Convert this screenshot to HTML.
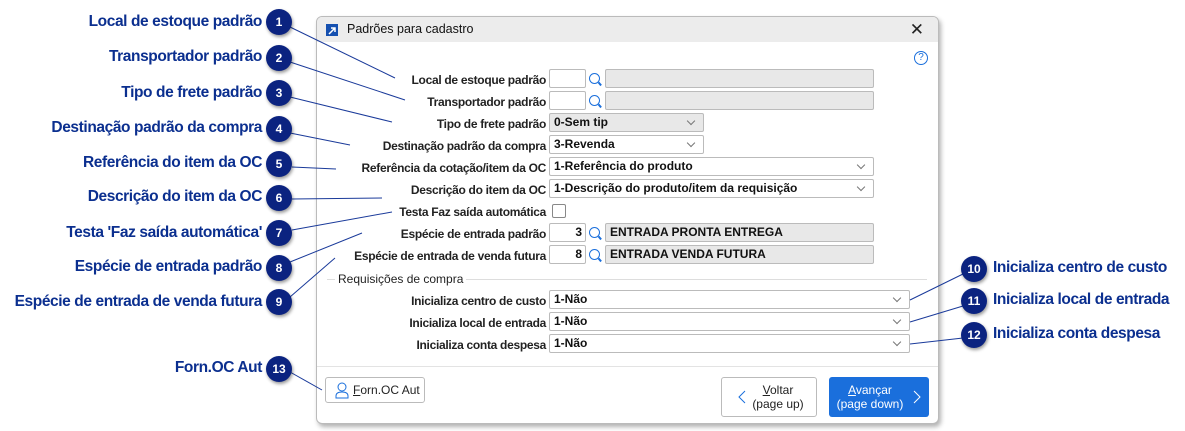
<!DOCTYPE html><html><head><meta charset="utf-8"><style>
body{margin:0;width:1185px;height:431px;background:#fff;position:relative;overflow:hidden;font-family:"Liberation Sans",sans-serif}
.co{position:absolute;right:923px;font-weight:bold;color:#0b2f8f;font-size:15.5px;white-space:nowrap;letter-spacing:-0.4px}
.cr{position:absolute;left:993px;font-weight:bold;color:#0b2f8f;font-size:15.5px;white-space:nowrap;letter-spacing:-0.4px}
.ci{position:absolute;width:26px;height:26px;border-radius:50%;background:#0b2380;color:#fff;font-size:12px;font-weight:bold;text-align:center;line-height:26px;box-shadow:1px 2px 3px rgba(0,0,0,.4);z-index:3}
.dlg{position:absolute;left:316px;top:16px;width:621px;height:406px;border:1px solid #bbb;border-radius:6px;background:#fff;box-shadow:2px 3px 5px rgba(0,0,0,.3);overflow:hidden}
.tb{height:25px;background:#ececec;font-size:12.5px;line-height:25px;padding-left:30px;color:#111}
.l{position:absolute;right:392px;font-size:12px;font-weight:bold;color:#222;white-space:nowrap;letter-spacing:-0.3px}
.f{position:absolute;height:19px;border:1px solid #bbb;border-radius:2px;background:#fff;box-sizing:border-box;font-size:12px;font-weight:bold;line-height:17px;padding-left:4px;color:#111}
.g{background:#e8e8e8}
.ch:after{content:"";position:absolute;right:9px;top:4px;width:5px;height:5px;border-right:1px solid #777;border-bottom:1px solid #777;transform:rotate(45deg)}
.s{position:absolute;width:9px;height:9px;border:1.5px solid #1a6fdc;border-radius:50%}
.s:after{content:"";position:absolute;left:8px;top:9px;width:4px;height:1.5px;background:#1a6fdc;transform:rotate(50deg)}
</style></head><body>
<div class="co" style="top:13px">Local de estoque padrão</div><div class="ci" style="left:266px;top:9px">1</div>
<div class="co" style="top:48px">Transportador padrão</div><div class="ci" style="left:266px;top:45px">2</div>
<div class="co" style="top:84px">Tipo de frete padrão</div><div class="ci" style="left:266px;top:80px">3</div>
<div class="co" style="top:119px">Destinação padrão da compra</div><div class="ci" style="left:266px;top:116px">4</div>
<div class="co" style="top:154px">Referência do item da OC</div><div class="ci" style="left:266px;top:151px">5</div>
<div class="co" style="top:188px">Descrição do item da OC</div><div class="ci" style="left:266px;top:185px">6</div>
<div class="co" style="top:224px">Testa 'Faz saída automática'</div><div class="ci" style="left:266px;top:220px">7</div>
<div class="co" style="top:258px">Espécie de entrada padrão</div><div class="ci" style="left:266px;top:255px">8</div>
<div class="co" style="top:293px">Espécie de entrada de venda futura</div><div class="ci" style="left:266px;top:289px">9</div>
<div class="co" style="top:359px">Forn.OC Aut</div><div class="ci" style="left:266px;top:356px">13</div>
<div class="ci" style="left:961px;top:256px">10</div><div class="cr" style="top:259px">Inicializa centro de custo</div>
<div class="ci" style="left:961px;top:288px">11</div><div class="cr" style="top:291px">Inicializa local de entrada</div>
<div class="ci" style="left:961px;top:322px">12</div><div class="cr" style="top:325px">Inicializa conta despesa</div>
<div class="dlg">
<div class="tb">Padrões para cadastro</div>
<div style="position:absolute;left:9px;top:7px;width:12px;height:12px;background:#1550b0"><svg width="12" height="12"><path d="M3 9L9 3M5 3H9V7" stroke="#fff" stroke-width="1.5" fill="none"/></svg></div>
<div style="position:absolute;right:14px;top:3px;font-size:17px;color:#222">✕</div>
<div style="position:absolute;left:597px;top:34px;width:12px;height:12px;border:1.3px solid #1a6fdc;border-radius:50%;font-size:10px;color:#1a6fdc;text-align:center;line-height:12px">?</div>
<div class="l" style="top:56px">Local de estoque padrão</div>
<div class="f" style="left:232px;top:52px;width:37px"></div><div class="s" style="left:272px;top:56px"></div><div class="f g" style="left:288px;top:52px;width:269px"></div>
<div class="l" style="top:78px">Transportador padrão</div>
<div class="f" style="left:232px;top:74px;width:37px"></div><div class="s" style="left:272px;top:78px"></div><div class="f g" style="left:288px;top:74px;width:269px"></div>
<div class="l" style="top:100px">Tipo de frete padrão</div><div class="f g ch" style="left:232px;top:96px;width:155px">0-Sem tip</div>
<div class="l" style="top:122px">Destinação padrão da compra</div><div class="f ch" style="left:232px;top:118px;width:155px">3-Revenda</div>
<div class="l" style="top:144px">Referência da cotação/item da OC</div><div class="f ch" style="left:232px;top:140px;width:325px">1-Referência do produto</div>
<div class="l" style="top:166px">Descrição do item da OC</div><div class="f ch" style="left:232px;top:162px;width:325px">1-Descrição do produto/item da requisição</div>
<div class="l" style="top:188px">Testa Faz saída automática</div><div style="position:absolute;left:235px;top:187px;width:12px;height:12px;border:1px solid #888;border-radius:2px"></div>
<div class="l" style="top:210px">Espécie de entrada padrão</div>
<div class="f" style="left:232px;top:206px;width:37px;text-align:right;padding-right:3px">3</div><div class="s" style="left:272px;top:210px"></div><div class="f g" style="left:288px;top:206px;width:269px">ENTRADA PRONTA ENTREGA</div>
<div class="l" style="top:232px">Espécie de entrada de venda futura</div>
<div class="f" style="left:232px;top:228px;width:37px;text-align:right;padding-right:3px">8</div><div class="s" style="left:272px;top:232px"></div><div class="f g" style="left:288px;top:228px;width:269px">ENTRADA VENDA FUTURA</div>
<div style="position:absolute;left:10px;top:262px;width:600px;border-top:1px solid #ddd"></div>
<div style="position:absolute;left:18px;top:255px;background:#fff;padding:0 3px;font-size:12px;color:#222">Requisições de compra</div>
<div class="l" style="top:277px">Inicializa centro de custo</div><div class="f ch" style="left:232px;top:273px;width:361px">1-Não</div>
<div class="l" style="top:299px">Inicializa local de entrada</div><div class="f ch" style="left:232px;top:295px;width:361px">1-Não</div>
<div class="l" style="top:321px">Inicializa conta despesa</div><div class="f ch" style="left:232px;top:317px;width:361px">1-Não</div>
<div style="position:absolute;left:0;top:349px;width:621px;border-top:1px solid #e3e3e3"></div>
<div style="position:absolute;left:8px;top:360px;width:100px;height:26px;border:1px solid #bbb;border-radius:3px;box-sizing:border-box;font-size:12px;line-height:24px;padding-left:27px;color:#222"><span style="text-decoration:underline">F</span>orn.OC Aut
<svg style="position:absolute;left:9px;top:4px" width="14" height="17"><circle cx="7" cy="5" r="4" stroke="#1a6fdc" fill="none"/><path d="M1 16V14Q1 10 7 10Q13 10 13 14V16Z" stroke="#1a6fdc" fill="none"/></svg></div>
<div style="position:absolute;left:404px;top:360px;width:96px;height:40px;border:1px solid #bbb;border-radius:3px;box-sizing:border-box;font-size:12px;color:#222;text-align:center;line-height:14px;padding:5px 0 0 18px"><span style="text-decoration:underline">V</span>oltar<br>(page up)
<svg style="position:absolute;left:16px;top:12px" width="8" height="14"><path d="M7 1L1 7L7 13" stroke="#1a6fdc" fill="none"/></svg></div>
<div style="position:absolute;left:512px;top:360px;width:100px;height:40px;background:#1a6fdc;border-radius:3px;font-size:12px;color:#fff;text-align:center;line-height:14px;padding-top:6px;box-sizing:border-box;padding-right:18px"><span style="text-decoration:underline">A</span>vançar<br>(page down)
<svg style="position:absolute;left:84px;top:13px" width="8" height="14"><path d="M1 1L7 7L1 13" stroke="#fff" fill="none"/></svg></div>
</div>
<svg style="position:absolute;left:0;top:0;z-index:2" width="1185" height="431"><g stroke="#1a3a9a" stroke-width="1" fill="none">
<path d="M290 27L395 78M290 62L405 100M290 97L392 122M290 133L350 145M292 167L336 169M292 199L382 198M292 230L392 212M290 262L362 233M290 297L335 258M290 372L322 390M963 274L910 300M963 306L910 322M963 338L910 344"/></g></svg>
</body></html>
